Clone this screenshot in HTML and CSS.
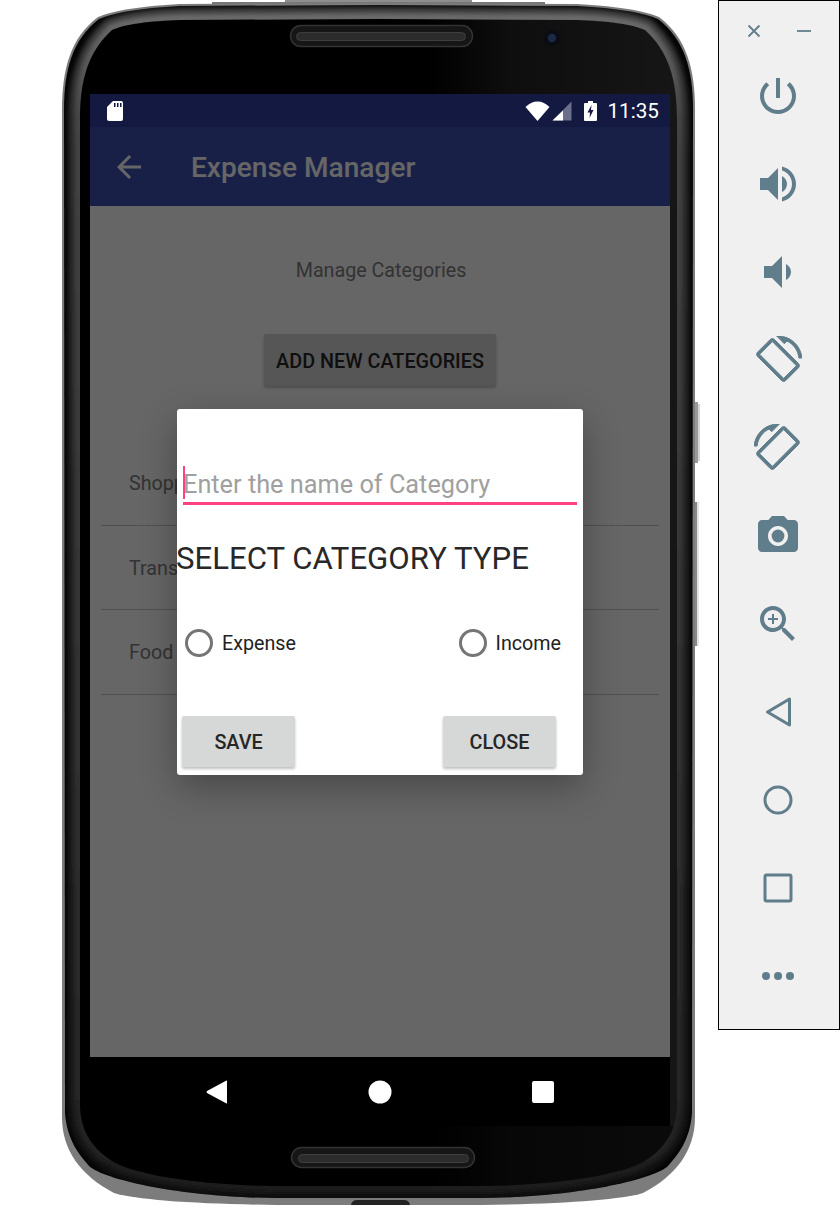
FILE: index.html
```html
<!DOCTYPE html>
<html>
<head>
  <title>Expense Manager</title>
  <link rel="stylesheet" href="styles.css">
</head>
<body>
  <div id="pagina">
    <div id="telefono">
      <svg class="carcasa" width="718" height="1222" viewBox="0 0 718 1222">
        <defs>
          <linearGradient id="brillo" x1="0" x2="1" y1="0" y2="0">
            <stop offset="0.58" stop-color="#000"/>
            <stop offset="0.72" stop-color="#0e0e0e"/>
            <stop offset="1" stop-color="#161616"/>
          </linearGradient>
          <linearGradient id="aro" gradientUnits="userSpaceOnUse" x1="0" x2="0" y1="0" y2="1205">
            <stop offset="0" stop-color="#707070"/>
            <stop offset="0.1" stop-color="#444"/>
            <stop offset="0.9" stop-color="#262626"/>
            <stop offset="1" stop-color="#1c1c1c"/>
          </linearGradient>
          <path id="forma-int" d="M80 120 C80 80 88 52 112 30 C125 24 150 21 180 20 L379 19 L577 20 C607 21 632 24 645 30 C669 52 677 80 677 120 L677 1105 C677 1140 652 1165 614 1172 C587 1180 527 1186 477 1186 L280 1186 C230 1186 170 1180 143 1172 C105 1165 80 1140 80 1105 Z"/>
          <clipPath id="corte-ext">
            <path d="M64 110 C64 70 72 40 99 19 C113 13 140 8 180 6 L379 5 L577 6 C617 8 644 13 658 19 C685 40 693 70 693 110 L692 1113 C690 1140 678 1155 667 1167 C645 1183 560 1198 480 1198 L277 1198 C197 1198 112 1183 90 1167 C79 1155 67 1140 65 1113 Z"/>
          </clipPath>
          <clipPath id="corte-int">
            <use href="#forma-int"/>
          </clipPath>
          <filter id="suave" x="-5%" y="-5%" width="110%" height="110%">
            <feGaussianBlur stdDeviation="2"/>
          </filter>
        </defs>
        <rect x="285" y="0" width="187" height="5" fill="#8e8e8e"/>
        <rect x="212" y="2" width="333" height="4" fill="#777"/>
        <rect x="695" y="402" width="3" height="61" fill="#999"/>
        <rect x="698" y="404" width="2" height="57" fill="#d4d4d4"/>
        <rect x="695" y="502" width="2" height="144" fill="#888"/>
        <rect x="697" y="502" width="2" height="144" fill="#e2e2e2"/>
        <path fill="#7c7c7c" d="M62 110 C62 70 70 38 98 17 C112 11 140 6 180 4 L379 3 L577 4 C617 6 645 11 659 17 C687 38 695 70 695 110 L695 1117 C695 1150 677 1175 643 1193 C620 1200 560 1204 480 1205 L277 1205 C197 1204 137 1200 114 1193 C80 1175 62 1150 62 1117 Z"/>
        <path fill="#222" d="M351 1205 Q352 1200 357 1200 L404 1200 Q409 1200 410 1205 Z"/>
        <g clip-path="url(#corte-ext)">
          <rect x="60" y="0" width="640" height="1210" fill="#060606"/>
          <use href="#forma-int" fill="none" stroke="url(#aro)" stroke-width="24" filter="url(#suave)" opacity="0.55"/>
          <use href="#forma-int" fill="none" stroke="url(#aro)" stroke-width="12" filter="url(#suave)"/>
        </g>
        <use href="#forma-int" fill="url(#brillo)"/>
        <rect x="80" y="1126" width="597" height="60" fill="#000" opacity="0.5" clip-path="url(#corte-int)"/>
        <rect class="rejilla" x="290.500" y="25.500" width="182" height="21" rx="10.500"/>
        <rect class="ranura" x="296.500" y="32.500" width="169" height="8" rx="4"/>
        <rect class="rejilla" x="291.500" y="1147.500" width="183" height="20" rx="10"/>
        <rect class="ranura" x="298.500" y="1154.500" width="170" height="8" rx="4"/>
        <circle cx="552" cy="38" r="8" fill="#0b0d14"/>
        <circle cx="552" cy="38" r="4" fill="#1c2a4a"/>
      </svg>

      <div id="pantalla">
        <div class="barra-estado">
          <svg class="icono-sd" width="16" height="20" viewBox="0 0 16 20">
            <path fill="#fff" d="M6 0 H14 Q16 0 16 2 V18 Q16 20 14 20 H2 Q0 20 0 18 V6 Z"/>
            <path fill="#131940" d="M7 2h1.500v4H7zM10 2h1.500v4H10zM13 2h1.500v4H13z"/>
          </svg>
          <div class="iconos-estado">
            <svg width="25" height="20" viewBox="0 0 25 20">
              <path fill="#fff" d="M0.500 6 C4 2.500 8 0.500 12.500 0.500 C17 0.500 21 2.500 24.500 6 L12.500 20 Z"/>
            </svg>
            <svg class="icono-senal" width="20" height="20" viewBox="0 0 20 20">
              <path fill="#6b6f8c" d="M19.500 0.500 V19.500 H0.500 Z"/>
              <path fill="#fff" d="M11 9.500 V19.500 H0.500 Z"/>
            </svg>
            <svg class="icono-bateria" width="13" height="20" viewBox="0 0 13 20">
              <path fill="#fff" d="M4 0 H9 V2 H12 Q13 2 13 3 V19 Q13 20 12 20 H1 Q0 20 0 19 V3 Q0 2 1 2 H4 Z"/>
              <path fill="#131940" d="M7.500 4 L3.500 11.500 H6 L5.500 17 L9.500 9 H7 Z"/>
            </svg>
            <span class="hora">11:35</span>
          </div>
        </div>

        <div class="cuerpo">
          <div class="barra-app">
            <svg width="36" height="36" viewBox="0 0 24 24">
              <path fill="#fff" d="M20 11H7.830l5.590-5.590L12 4l-8 8 8 8 1.410-1.410L7.830 13H20v-2z"/>
            </svg>
            <span class="titulo">Expense Manager</span>
          </div>

          <div class="contenido">
            <p class="subtitulo">Manage Categories</p>
            <button class="boton boton-nuevo">ADD NEW CATEGORIES</button>
            <ul class="lista">
              <li>Shopping</li>
              <li>Transport</li>
              <li>Food</li>
            </ul>
          </div>

          <div class="velo"></div>

          <div class="dialogo">
            <div class="campo">
              <span class="cursor"></span>
              <input type="text" placeholder="Enter the name of Category">
            </div>
            <h2>SELECT CATEGORY TYPE</h2>
            <div class="opciones">
              <label><span class="radio"></span>Expense</label>
              <label><span class="radio"></span>Income</label>
            </div>
            <div class="acciones">
              <button class="boton">SAVE</button>
              <button class="boton">CLOSE</button>
            </div>
          </div>
        </div>

        <div class="barra-nav">
          <svg width="21" height="24" viewBox="0 0 21 24">
            <path fill="#fff" d="M21 1 V23 Q21 24 20 23.300 L1 13 Q0 12 1 11 L20 0.700 Q21 0 21 1 Z"/>
          </svg>
          <svg width="24" height="24" viewBox="0 0 24 24"><circle cx="12" cy="12" r="11.500" fill="#fff"/></svg>
          <svg width="22" height="22" viewBox="0 0 22 22"><rect width="22" height="22" rx="2" fill="#fff"/></svg>
        </div>
      </div>
    </div>

    <div id="panel">
      <div class="panel-top">
        <svg width="14" height="14" viewBox="0 0 14 14"><path d="M1.500 1.500 L12.500 12.500 M12.500 1.500 L1.500 12.500" stroke="#607d8b" stroke-width="1.800" fill="none"/></svg>
        <svg width="14" height="14" viewBox="0 0 14 14"><path d="M0 7 H14" stroke="#607d8b" stroke-width="1.800" fill="none"/></svg>
      </div>
      <div class="panel-icono">
        <svg width="48" height="48" viewBox="0 0 24 24"><path d="M13 3h-2v10h2V3zm4.830 2.170l-1.420 1.420C17.990 7.860 19 9.810 19 12c0 3.870-3.130 7-7 7s-7-3.130-7-7c0-2.190 1.010-4.140 2.580-5.420L6.170 5.170C4.230 6.820 3 9.260 3 12c0 4.970 4.030 9 9 9s9-4.030 9-9c0-2.740-1.230-5.180-3.170-6.830z"/></svg>
      </div>
      <div class="panel-icono">
        <svg width="48" height="48" viewBox="0 0 24 24"><path d="M3 9v6h4l5 5V4L7 9H3zm13.500 3c0-1.770-1.020-3.290-2.500-4.030v8.050c1.480-.73 2.500-2.250 2.500-4.020zM14 3.230v2.060c2.890.86 5 3.540 5 6.710s-2.110 5.850-5 6.710v2.060c4.010-.91 7-4.490 7-8.770s-2.990-7.860-7-8.770z"/></svg>
      </div>
      <div class="panel-icono">
        <svg width="48" height="48" viewBox="0 0 24 24"><path d="M18.500 12c0-1.770-1.020-3.290-2.500-4.030v8.050c1.480-.73 2.500-2.250 2.500-4.020zM5 9v6h4l5 5V4L9 9H5z"/></svg>
      </div>
      <div class="panel-icono">
        <svg class="grueso" width="48" height="48" viewBox="0 0 24 24"><path d="M16.480 2.520c3.270 1.550 5.610 4.720 5.970 8.480h1.500C23.440 4.840 18.290 0 12 0l-.66.030 3.810 3.810 1.330-1.320zm-6.250-.77c-.59-.59-1.540-.59-2.120 0L1.750 8.110c-.59.59-.59 1.540 0 2.120l12.020 12.020c.59.59 1.540.59 2.120 0l6.360-6.360c.59-.59.59-1.540 0-2.120L10.230 1.750zm4.600 19.440L2.810 9.170l6.360-6.360 12.020 12.020-6.360 6.360z"/></svg>
      </div>
      <div class="panel-icono">
        <svg class="grueso espejo" width="48" height="48" viewBox="0 0 24 24"><path d="M16.480 2.520c3.270 1.550 5.610 4.720 5.970 8.480h1.500C23.440 4.840 18.290 0 12 0l-.66.030 3.810 3.810 1.330-1.320zm-6.250-.77c-.59-.59-1.540-.59-2.120 0L1.750 8.110c-.59.59-.59 1.540 0 2.120l12.020 12.020c.59.59 1.540.59 2.120 0l6.360-6.360c.59-.59.59-1.540 0-2.120L10.230 1.750zm4.600 19.440L2.810 9.170l6.360-6.360 12.020 12.020-6.360 6.360z"/></svg>
      </div>
      <div class="panel-icono">
        <svg width="48" height="48" viewBox="0 0 24 24"><circle cx="12" cy="12" r="3.200"/><path d="M9 2L7.170 4H4c-1.100 0-2 .9-2 2v12c0 1.100.9 2 2 2h16c1.100 0 2-.9 2-2V6c0-1.100-.9-2-2-2h-3.170L15 2H9zm3 15c-2.760 0-5-2.240-5-5s2.240-5 5-5 5 2.240 5 5-2.240 5-5 5z"/></svg>
      </div>
      <div class="panel-icono">
        <svg width="48" height="48" viewBox="0 0 24 24"><path d="M15.500 14h-.79l-.28-.27C15.410 12.590 16 11.110 16 9.500 16 5.910 13.090 3 9.500 3S3 5.910 3 9.500 5.910 16 9.500 16c1.610 0 3.090-.59 4.230-1.570l.27.28v.79l5 4.990L20.490 19l-4.990-5zm-6 0C7.010 14 5 11.990 5 9.500S7.010 5 9.500 5 14 7.010 14 9.500 11.990 14 9.500 14z"/><path d="M12 10h-2v2H9v-2H7V9h2V7h1v2h2v1z"/></svg>
      </div>
      <div class="panel-icono">
        <svg class="contorno" width="48" height="48" viewBox="0 0 48 48"><path d="M13.500 24 L35.500 11 V37 Z"/></svg>
      </div>
      <div class="panel-icono">
        <svg class="contorno" width="48" height="48" viewBox="0 0 48 48"><circle cx="24" cy="24" r="13"/></svg>
      </div>
      <div class="panel-icono">
        <svg class="contorno" width="48" height="48" viewBox="0 0 48 48"><rect x="11" y="11" width="26" height="26" rx="1.500"/></svg>
      </div>
      <div class="panel-icono">
        <svg width="48" height="48" viewBox="0 0 48 48"><circle cx="12" cy="24" r="4"/><circle cx="24" cy="24" r="4"/><circle cx="36" cy="24" r="4"/></svg>
      </div>
    </div>
  </div>
</body>
</html>
```

FILE: styles.css
```css
body {
  margin: 0;
  padding: 0;
  background-color: #fff;
  font-family: Roboto, "Liberation Sans", sans-serif;
}

#pagina {
  display: flex;
  align-items: flex-start;
  width: 840px;
  height: 1222px;
  overflow: hidden;
}

/* Telefono */
#telefono {
  position: relative;
  flex: none;
  width: 718px;
  height: 1222px;
  padding: 94px 48px 0 90px;
  box-sizing: border-box;
}

.carcasa {
  position: absolute;
  left: 0;
  top: 0;
}

.rejilla {
  fill: #161616;
  stroke: #333;
  stroke-width: 1.500;
}

.ranura {
  fill: #2c2c2c;
  stroke: #3e3e3e;
  stroke-width: 1;
}

#pantalla {
  position: relative;
  width: 580px;
  height: 1032px;
  display: flex;
  flex-direction: column;
}

.barra-estado {
  flex: none;
  height: 33px;
  background-color: #131940;
  display: flex;
  align-items: center;
  justify-content: space-between;
  padding: 0 11px 0 17px;
}

.iconos-estado {
  display: flex;
  align-items: center;
}

.iconos-estado .icono-senal {
  margin-left: 2px;
}

.iconos-estado .icono-bateria {
  margin-left: 12px;
}

.hora {
  margin-left: 10px;
  color: #fff;
  font-size: 20.700px;
  line-height: 24px;
}

.cuerpo {
  position: relative;
  flex: 1;
  display: flex;
  flex-direction: column;
}

.barra-app {
  flex: none;
  height: 79px;
  background-color: #3f51b5;
  display: flex;
  align-items: center;
  padding-left: 21px;
  box-sizing: border-box;
}

.titulo {
  margin-left: 44px;
  padding-top: 2px;
  color: #fff;
  font-size: 28.100px;
  font-weight: 500;
}

.contenido {
  flex: 1;
  background-color: #fff;
  display: flex;
  flex-direction: column;
  align-items: center;
  padding-top: 52px;
}

.subtitulo {
  margin: 0;
  height: 24px;
  line-height: 26px;
  font-size: 19.700px;
  color: #808080;
  transform: translateX(1px);
}

.boton {
  width: 113px;
  height: 51px;
  padding: 2px 0 0;
  border: none;
  border-radius: 2px;
  background-color: #d6d7d7;
  color: #262626;
  font-family: Roboto, "Liberation Sans", sans-serif;
  font-size: 19.800px;
  font-weight: 500;
  box-shadow: 0 2px 3px rgba(0, 0, 0, 0.25);
}

.boton-nuevo {
  width: 232px;
  height: 52px;
  margin-top: 52px;
}

.lista {
  list-style: none;
  margin: 55px 0 0;
  padding: 0;
  width: 558px;
}

.lista li {
  height: 84.500px;
  line-height: 86px;
  box-sizing: border-box;
  padding-left: 28px;
  border-bottom: 1px solid #c8c8c8;
  font-size: 19.700px;
  color: #808080;
}

.velo {
  position: absolute;
  left: 0;
  right: 0;
  top: 0;
  bottom: 0;
  background-color: rgba(0, 0, 0, 0.6);
}

/* Dialogo */
.dialogo {
  position: absolute;
  left: 87px;
  top: 282px;
  width: 406px;
  height: 366px;
  background-color: #fff;
  border-radius: 3px;
  box-shadow: 0 12px 36px rgba(0, 0, 0, 0.3);
}

.campo {
  position: relative;
  margin: 57px 6px 0;
  height: 39px;
  box-sizing: border-box;
  border-bottom: 3px solid #ff4081;
}

.cursor {
  position: absolute;
  left: 0;
  top: 0;
  width: 2px;
  height: 33px;
  background-color: #ff4081;
}

.campo input {
  width: 100%;
  height: 36px;
  padding: 0;
  margin: 0;
  border: none;
  outline: none;
  background: none;
  box-sizing: border-box;
  font-family: Roboto, "Liberation Sans", sans-serif;
  font-size: 25.300px;
}

.campo input::placeholder {
  color: #a0a0a0;
  opacity: 1;
}

.dialogo h2 {
  margin: 36px 0 0 -1px;
  font-size: 31.150px;
  line-height: 36px;
  font-weight: 400;
  color: #282828;
}

.opciones {
  display: flex;
  justify-content: space-between;
  height: 40px;
  margin-top: 46px;
  padding: 0 22px 0 8px;
}

.opciones label {
  display: flex;
  align-items: center;
  font-size: 19.700px;
  color: #222;
}

.radio {
  width: 28px;
  height: 28px;
  margin-right: 9px;
  border: 3px solid #757575;
  border-radius: 50%;
  box-sizing: border-box;
}

.acciones {
  display: flex;
  justify-content: space-between;
  margin-top: 53px;
  padding: 0 27px 0 5px;
}

.barra-nav {
  flex: none;
  height: 69px;
  background-color: #000;
  display: flex;
  align-items: center;
  justify-content: space-between;
  padding: 0 116px;
  box-sizing: border-box;
}

/* Panel lateral */
#panel {
  flex: none;
  width: 122px;
  height: 1030px;
  border: 1px solid #000;
  box-sizing: border-box;
  background-color: #f0f0f0;
  display: flex;
  flex-direction: column;
  align-items: center;
  padding-right: 2px;
}

.panel-top {
  flex: none;
  width: 100%;
  height: 51px;
  box-sizing: border-box;
  display: flex;
  align-items: center;
  justify-content: space-between;
  padding: 8px 26px 0 28px;
}

.panel-icono {
  flex: none;
  height: 88px;
  display: flex;
  align-items: center;
}

.panel-icono svg {
  fill: #607d8b;
}

.panel-icono .grueso {
  stroke: #607d8b;
  stroke-width: 0.500;
}

.panel-icono .espejo {
  transform: scaleX(-1);
}

.panel-icono .contorno {
  fill: none;
  stroke: #607d8b;
  stroke-width: 3;
  stroke-linejoin: round;
}
```
